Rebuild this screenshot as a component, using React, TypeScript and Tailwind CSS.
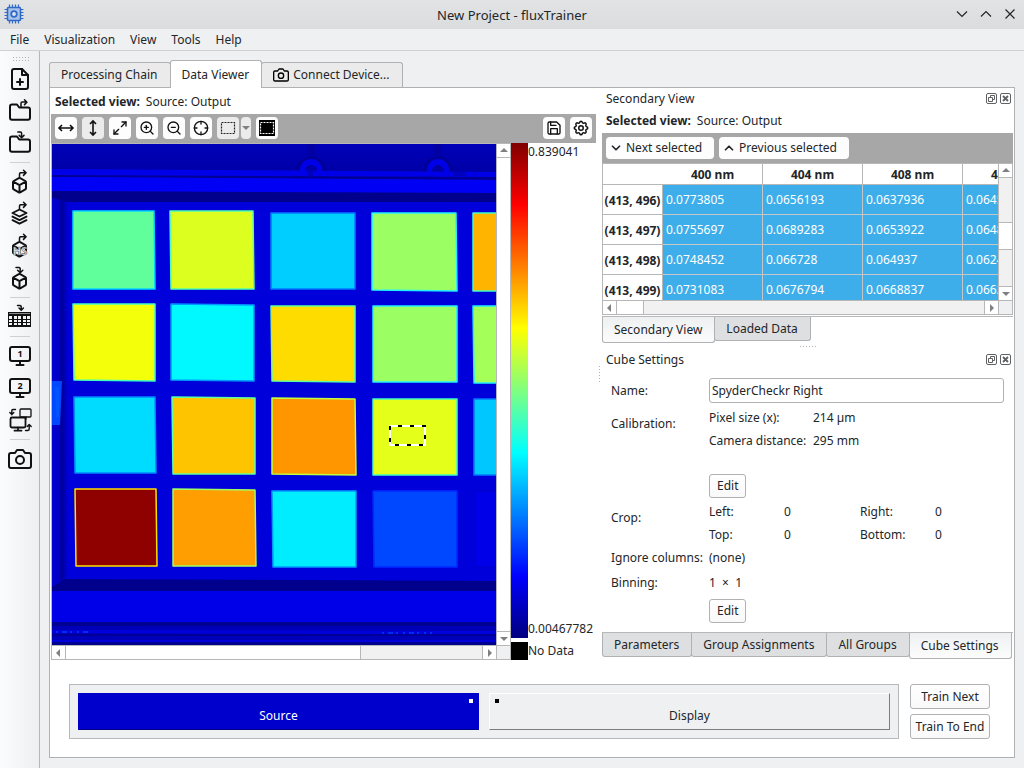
import { useState } from 'react';
import type { ReactNode } from 'react';
import {
  FiCamera,
  FiChevronDown,
  FiChevronUp,
  FiCrosshair,
  FiFilePlus,
  FiMaximize2,
  FiSave,
  FiZoomIn,
  FiZoomOut,
} from 'react-icons/fi';
import { TbSettings } from 'react-icons/tb';

const MENUS = ['File', 'Visualization', 'View', 'Tools', 'Help'];

const COLUMNS = ['400 nm', '404 nm', '408 nm', '412 nm'];

const ROWS = [
  { pos: '(413, 496)', values: ['0.0773805', '0.0656193', '0.0637936', '0.0645321'] },
  { pos: '(413, 497)', values: ['0.0755697', '0.0689283', '0.0653922', '0.0648117'] },
  { pos: '(413, 498)', values: ['0.0748452', '0.066728', '0.064937', '0.0624409'] },
  { pos: '(413, 499)', values: ['0.0731083', '0.0676794', '0.0668837', '0.0662518'] },
];

// Color patches of the chart: corner points, fill, edge color
const PATCHES = [
  { points: '21,67 102,67 103,145 21,145', fill: '#60ff9c', edge: '#00d8ff' },
  { points: '118,67 201,67 202,145 119,145', fill: '#dcff20', edge: '#50ffb0' },
  { points: '219,69 303,69 303,145 219,145', fill: '#00ceff', edge: '#0078ff' },
  { points: '320,69 404,69 405,147 320,146', fill: '#9bff64', edge: '#20f0ff' },
  { points: '421,69 460,69 460,147 421,147', fill: '#ffb400', edge: '#40ffc0' },
  { points: '21,160 103,160 103,237 22,236', fill: '#f4ff0a', edge: '#40ffc0' },
  { points: '119,160 202,161 202,237 119,236', fill: '#00f8ff', edge: '#0098ff' },
  { points: '219,162 303,162 303,238 220,237', fill: '#ffdc00', edge: '#60ffa0' },
  { points: '321,162 405,162 405,238 321,238', fill: '#9bff64', edge: '#20f0ff' },
  { points: '421,162 460,162 460,239 422,239', fill: '#a4ff58', edge: '#20f0ff' },
  { points: '22,253 103,253 104,329 23,329', fill: '#00dcff', edge: '#0088ff' },
  { points: '120,253 203,254 203,330 121,330', fill: '#ffc400', edge: '#60ffa0' },
  { points: '220,254 303,255 304,331 220,330', fill: '#ff9600', edge: '#c0ff40' },
  { points: '321,255 405,255 405,331 321,331', fill: '#e4ff1a', edge: '#40ffc0' },
  { points: '422,255 460,255 460,331 422,331', fill: '#00c8ff', edge: '#0078ff' },
  { points: '23,345 104,345 105,422 24,422', fill: '#8f0000', edge: '#ffe000' },
  { points: '121,345 203,346 204,422 121,422', fill: '#ff9e00', edge: '#a0ff60' },
  { points: '220,347 304,347 304,423 221,423', fill: '#00ecff', edge: '#0098ff' },
  { points: '321,347 405,347 405,423 322,423', fill: '#0048ff', edge: '#0028ff' },
  { points: '422,347 460,347 460,423 422,423', fill: '#0000e8', edge: '#0000d0' },
];

const ARROW_OUT = 'M15.500 11V8q0-1.200 1.200-1.200H21.500M19.500 4.200l2.600 2.600-2.600 2.600';
const ARROW_IN = 'M12 5.500h3q1.200 0 1.200 1.200V10.500M13.600 8.200l2.600 2.600 2.600-2.600';
const FOLDER =
  'M26 22.800a2 2 0 0 1-2 2H8a2 2 0 0 1-2-2V11.500a2 2 0 0 1 2-2h5l2.200 3H24a2 2 0 0 1 2 2z';

function ToolIcon({ children }: { children: ReactNode }) {
  return (
    <svg
      viewBox="0 0 32 32"
      className="w-8 h-8"
      fill="none"
      stroke="#111111"
      strokeWidth="2"
      strokeLinecap="round"
      strokeLinejoin="round"
      aria-hidden="true"
    >
      {children}
    </svg>
  );
}

function Cube() {
  return (
    <path d="M22 16.200v6a1.400 1.400 0 0 1-.700 1.200l-5.100 2.900a1.400 1.400 0 0 1-1.400 0l-5.100-2.900a1.400 1.400 0 0 1-.700-1.200v-6a1.400 1.400 0 0 1 .700-1.200l5.100-2.900a1.400 1.400 0 0 1 1.400 0l5.100 2.900a1.400 1.400 0 0 1 .700 1.200zM9.300 15.600l6.200 3.500 6.200-3.500M15.500 26v-7" />
  );
}

function Monitor({ digit }: { digit: string }) {
  return (
    <>
      <rect x="6" y="7" width="20" height="14" rx="2" />
      <path d="M16 21v4M12.500 25h7" />
      <text
        x="16"
        y="17"
        textAnchor="middle"
        fill="#111111"
        stroke="none"
        className="text-[9px] font-bold"
      >
        {digit}
      </text>
    </>
  );
}

function ToolButton({ label, children }: { label: string; children: ReactNode }) {
  return (
    <button aria-label={label} title={label} className="w-8 h-8 flex items-center justify-center text-[#111111]">
      {children}
    </button>
  );
}

function ToolDivider() {
  return <div className="w-5 h-px my-[3px] bg-[#cfd0d2]" />;
}

function SideToolbar() {
  return (
    <aside className="w-10 shrink-0 pl-px pt-[5px] flex flex-col items-center border-r border-[#b4b6b8] bg-gradient-to-r from-[#fbfcfe] to-[#eeeff1]">
      <div className="w-[17px] h-[5px] mb-0.5 bg-[radial-gradient(#b0b2b4_1px,transparent_1px)] bg-[length:3px_3px]" />
      <ToolButton label="New project">
        <FiFilePlus className="w-6 h-6" />
      </ToolButton>
      <ToolButton label="Open project">
        <ToolIcon>
          <path d={FOLDER} />
          <path d="M17 12V8.200q0-1.200 1.200-1.200H22.500M20.500 4.800l2.400 2.400-2.400 2.400" strokeWidth="1.500" />
        </ToolIcon>
      </ToolButton>
      <ToolButton label="Save project">
        <ToolIcon>
          <path d={FOLDER} />
          <path d="M13.800 5h2.600q1.200 0 1.200 1.200v4M15.200 8.400l2.400 2.400 2.400-2.400" strokeWidth="1.500" />
        </ToolIcon>
      </ToolButton>
      <ToolDivider />
      <ToolButton label="Load cube">
        <ToolIcon>
          <Cube />
          <path d={ARROW_OUT} strokeWidth="1.500" />
        </ToolIcon>
      </ToolButton>
      <ToolButton label="Load layers">
        <ToolIcon>
          <path
            d="M15.500 11.500l-7 3.500 7 3.500 7-3.500zM8.500 18.600l7 3.500 7-3.500M8.500 22.200l7 3.500 7-3.500"
            strokeWidth="1.900"
          />
          <path d={ARROW_OUT} strokeWidth="1.500" />
        </ToolIcon>
      </ToolButton>
      <ToolButton label="Load HS cube">
        <ToolIcon>
          <Cube />
          <text
            x="16"
            y="25"
            textAnchor="middle"
            fill="#ececee"
            stroke="#777777"
            strokeWidth="0.600"
            className="text-[11px] font-bold"
          >
            HS
          </text>
          <path d={ARROW_OUT} strokeWidth="1.500" />
        </ToolIcon>
      </ToolButton>
      <ToolButton label="Save cube">
        <ToolIcon>
          <Cube />
          <path d={ARROW_IN} strokeWidth="1.500" />
        </ToolIcon>
      </ToolButton>
      <ToolDivider />
      <ToolButton label="Export table">
        <ToolIcon>
          <path d="M13.500 4.500h2.500q1.200 0 1.200 1.200v3M15 7l2.200 2.200L19.400 7" strokeWidth="1.500" />
          <rect x="4" y="11" width="23" height="15" fill="#111111" stroke="none" />
          {[15, 19, 22].map((y) =>
            [5, 10, 14, 19, 23].map((x) => (
              <rect key={`${x}-${y}`} x={x} y={y} width={3} height={y === 15 ? 3 : 2} fill="#f2f3f5" stroke="none" />
            ))
          )}
          <path d="M5 12.500h21" stroke="#8a8a8a" strokeWidth="1" strokeLinecap="butt" />
        </ToolIcon>
      </ToolButton>
      <ToolDivider />
      <ToolButton label="Monitor 1">
        <ToolIcon>
          <Monitor digit="1" />
        </ToolIcon>
      </ToolButton>
      <ToolButton label="Monitor 2">
        <ToolIcon>
          <Monitor digit="2" />
        </ToolIcon>
      </ToolButton>
      <ToolButton label="Swap monitors">
        <ToolIcon>
          <rect x="16" y="5" width="11" height="8" rx="1" strokeWidth="1.300" />
          <path d="M22 13v2" strokeWidth="1.300" />
          <rect x="6.500" y="13.500" width="15" height="10" rx="1.500" fill="#f2f3f5" strokeWidth="1.800" />
          <path d="M14 23.500v3M10.500 26.700h7" strokeWidth="1.700" />
          <path d="M11.500 5.500H9q-1.200 0-1.200 1.200v4M5.800 8.600l2 2 2-2" strokeWidth="1.400" />
          <path d="M21.500 26.500h2.200q1.500 0 1.500-1.500v-4M23.200 22.600l2-2 2 2" strokeWidth="1.400" />
        </ToolIcon>
      </ToolButton>
      <ToolDivider />
      <ToolButton label="Camera">
        <FiCamera className="w-6 h-6" />
      </ToolButton>
    </aside>
  );
}

function TitleBar() {
  return (
    <header className="relative h-[29px] flex items-center justify-center bg-gradient-to-b from-[#e1e3e4] to-[#dbdcde] text-[13px]">
      <svg
        viewBox="0 0 20 20"
        className="absolute left-1 top-1 w-5 h-5"
        fill="none"
        stroke="#2f6ac8"
        strokeWidth="1.600"
        aria-hidden="true"
      >
        <rect x="3.500" y="3.500" width="13" height="13" rx="1" fill="#a9c2e8" />
        <circle cx="10" cy="10" r="2.800" fill="#dfe6f0" strokeWidth="1.800" />
        <path
          d="M5.500 .500v3M8.500 .500v3M11.500 .500v3M14.500 .500v3M5.500 16.500v3M8.500 16.500v3M11.500 16.500v3M14.500 16.500v3M.500 5.500h3M.500 8.500h3M.500 11.500h3M.500 14.500h3M16.500 5.500h3M16.500 8.500h3M16.500 11.500h3M16.500 14.500h3"
          strokeWidth="1.200"
        />
      </svg>
      <h1>New Project - fluxTrainer</h1>
      <div className="absolute right-1.5 top-1.5 flex gap-2 text-[#232629]">
        <button aria-label="Minimize">
          <svg viewBox="0 0 16 16" className="w-4 h-4" fill="none" stroke="currentColor" strokeWidth="1.200">
            <path d="M3 5.500l5 5 5-5" />
          </svg>
        </button>
        <button aria-label="Maximize">
          <svg viewBox="0 0 16 16" className="w-4 h-4" fill="none" stroke="currentColor" strokeWidth="1.200">
            <path d="M3 10.500l5-5 5 5" />
          </svg>
        </button>
        <button aria-label="Close">
          <svg viewBox="0 0 16 16" className="w-4 h-4" fill="none" stroke="currentColor" strokeWidth="1.200">
            <path d="M3.500 3.500l9 9M12.500 3.500l-9 9" />
          </svg>
        </button>
      </div>
    </header>
  );
}

function SelectedView() {
  return (
    <>
      <span className="font-bold">Selected view:</span>
      <span className="ml-1.5">Source: Output</span>
    </>
  );
}

function ViewButton({ label, dim, children }: { label: string; dim?: boolean; children: ReactNode }) {
  return (
    <button
      aria-label={label}
      title={label}
      className={`w-[22px] h-[22px] shrink-0 flex items-center justify-center rounded-sm text-[#111111] ${
        dim ? 'bg-[#ebebeb]' : 'bg-[#fdfdfd]'
      }`}
    >
      {children}
    </button>
  );
}

function SelectIcon({ filled }: { filled?: boolean }) {
  return (
    <svg viewBox="0 0 18 18" className="w-[18px] h-[18px]" fill="none" strokeWidth="1.200" aria-hidden="true">
      {filled && <rect x="1" y="1" width="16" height="16" fill="#000000" />}
      <rect
        x="2.500"
        y="3.500"
        width="13"
        height="11"
        stroke={filled ? '#ffffff' : '#222222'}
        strokeDasharray="2 1"
      />
    </svg>
  );
}

const TRIANGLES = {
  up: 'M0 5l4-4 4 4z',
  down: 'M0 2l4 4 4-4z',
  left: 'M5 0L1 4l4 4z',
  right: 'M2 0l4 4-4 4z',
};

function Triangle({ dir }: { dir: keyof typeof TRIANGLES }) {
  return (
    <svg viewBox="0 0 8 8" className="w-2 h-2" fill="#7f8081" aria-hidden="true">
      <path d={TRIANGLES[dir]} />
    </svg>
  );
}

function ScrollButton({ dir }: { dir: keyof typeof TRIANGLES }) {
  return (
    <button aria-label={`Scroll ${dir}`} className="w-[13px] h-[13px] shrink-0 flex items-center justify-center bg-white">
      <Triangle dir={dir} />
    </button>
  );
}

function CubeImage() {
  return (
    <svg
      viewBox="0 0 444 501"
      preserveAspectRatio="xMinYMin slice"
      className="block w-full h-[501px]"
      role="img"
      aria-label="False color view of the cube"
    >
      <defs>
        <linearGradient id="top" x1="0" y1="0" x2="0" y2="1">
          <stop offset="0" stopColor="#0000b8" />
          <stop offset="1" stopColor="#0000a8" />
        </linearGradient>
        <linearGradient id="left" x1="0" y1="0" x2="1" y2="0">
          <stop offset="0" stopColor="#0000d0" />
          <stop offset="0.4" stopColor="#0000c8" />
          <stop offset="0.6" stopColor="#000098" />
          <stop offset="1" stopColor="#0000d8" />
        </linearGradient>
      </defs>
      <rect width="460" height="501" fill="#0000da" />
      <rect width="460" height="28" fill="url(#top)" />
      {/* rivets on the upper rail */}
      {[259, 386].map((x) => (
        <g key={x}>
          <rect x={x - 4} y="0" width="8" height="16" fill="#0000a4" />
          <circle cx={x} cy="28" r="14" fill="#0000a0" stroke="#000098" strokeWidth="3" />
          <circle cx={x} cy="26" r="11" fill="#0000e8" />
          <circle cx={x} cy="27" r="6" fill="#0000a4" />
        </g>
      ))}
      <path d="M0 25L460 28v5L0 31z" fill="#0000e8" />
      <path d="M0 31L460 33v3L0 33z" fill="#000096" />
      <path d="M0 33L460 36v13L0 47z" fill="#0000f4" />
      <path d="M255 27h6v5h-6zM402 28h12v4h-12z" fill="#0000c0" />
      <path d="M0 47L460 49v9H12L0 54z" fill="#00008c" />
      <path d="M0 54L16 58V432L0 442z" fill="url(#left)" />
      <path d="M0 237h10l-2 44H0z" fill="#0048ff" />
      <path d="M3 243h4v30H4z" fill="#0068ff" opacity="0.4" />
      <path d="M12 435L460 437v11H0V443z" fill="#00008c" />
      <path d="M0 447h460v31H0z" fill="#0000e8" />
      <path d="M0 478h460v4H0z" fill="#000092" />
      <path d="M0 482h460v14H0z" fill="#0000b8" />
      <path d="M0 486L460 487v3L0 489z" fill="#0000dc" />
      <path d="M0 490h460v2H0z" fill="#000098" />
      <path d="M0 498h460v3H0z" fill="#000090" />
      <path
        d="M4 488h32M330 489h50"
        stroke="#0048ff"
        strokeWidth="2"
        strokeDasharray="2 4 5 3 2 5"
        opacity="0.6"
      />
      {PATCHES.map((patch) => (
        <polygon
          key={patch.points}
          points={patch.points}
          fill={patch.fill}
          stroke={patch.edge}
          strokeWidth="1.500"
          strokeLinejoin="round"
        />
      ))}
      {/* current selection */}
      <rect x="338" y="282" width="35" height="19" fill="none" stroke="#ffffff" strokeWidth="2" />
      <rect
        x="338"
        y="282"
        width="35"
        height="19"
        fill="none"
        stroke="#000000"
        strokeWidth="2"
        strokeDasharray="4 8"
        strokeDashoffset="4"
      />
    </svg>
  );
}

function DataViewer() {
  return (
    <section className="min-w-0">
      <div className="h-[26px] pl-1 pt-px flex items-center">
        <SelectedView />
      </div>
      <div className="h-[29px] px-1 pb-px flex items-center gap-[5px] bg-[#a7a7a7]">
        <ViewButton label="Fit width">
          <svg viewBox="0 0 18 18" className="w-[18px] h-[18px]" fill="none" stroke="currentColor" strokeWidth="1.600">
            <path d="M2 9h14M5 6L2 9l3 3M13 6l3 3-3 3" />
          </svg>
        </ViewButton>
        <ViewButton label="Fit height" dim>
          <svg viewBox="0 0 18 18" className="w-[18px] h-[18px]" fill="none" stroke="currentColor" strokeWidth="1.600">
            <path d="M9 2v14M6 5l3-3 3 3M6 13l3 3 3-3" />
          </svg>
        </ViewButton>
        <ViewButton label="Fit window">
          <FiMaximize2 className="w-4 h-4" />
        </ViewButton>
        <ViewButton label="Zoom in">
          <FiZoomIn className="w-4 h-4" />
        </ViewButton>
        <ViewButton label="Zoom out">
          <FiZoomOut className="w-4 h-4" />
        </ViewButton>
        <ViewButton label="Pick pixel">
          <FiCrosshair className="w-4 h-4" />
        </ViewButton>
        <div className="flex gap-0.5">
          <ViewButton label="Select rectangle" dim>
            <SelectIcon />
          </ViewButton>
          <button
            aria-label="Selection modes"
            className="w-2.5 h-[22px] flex items-center justify-center rounded-sm bg-[#ebebeb]"
          >
            <Triangle dir="down" />
          </button>
        </div>
        <ViewButton label="Invert selection">
          <SelectIcon filled />
        </ViewButton>
        <div className="flex-1" />
        <ViewButton label="Save image">
          <FiSave className="w-4 h-4" />
        </ViewButton>
        <ViewButton label="View settings">
          <TbSettings className="w-[18px] h-[18px]" />
        </ViewButton>
      </div>
      <div className="flex">
        <div className="flex-1 min-w-0 border border-r-0 border-[#b7b7b7]">
          <div className="flex">
            <div className="flex-1 min-w-0">
              <CubeImage />
            </div>
            <div className="w-[15px] shrink-0 border-x border-[#b7b7b7] flex flex-col bg-white">
              <ScrollButton dir="up" />
              <div className="flex-1 border-y border-[#b7b7b7] bg-white" />
              <ScrollButton dir="down" />
            </div>
          </div>
          <div className="flex border-t border-[#b7b7b7]">
            <ScrollButton dir="left" />
            <div className="flex-1 flex border-x border-[#b7b7b7] bg-[#f1f1f1]">
              <div className="w-[71%] border-r border-[#b7b7b7] bg-white" />
            </div>
            <ScrollButton dir="right" />
            <div className="w-[15px] border-x border-[#b7b7b7] bg-[#eff0f1]" />
          </div>
        </div>
        <div className="w-[85px] shrink-0 flex flex-col">
          <div className="flex-1 flex">
            <div className="w-[17px] shrink-0 bg-[linear-gradient(to_bottom,#800000,#ff0000_12.5%,#ffff00_37.5%,#00ffff_62.5%,#0000ff_87.5%,#000080)]" />
            <div className="flex flex-col justify-between">
              <span>0.839041</span>
              <span>0.00467782</span>
            </div>
          </div>
          <div className="mt-1 h-[18px] flex items-center">
            <div className="w-[17px] h-[18px] bg-black" />
            <span>No Data</span>
          </div>
        </div>
      </div>
    </section>
  );
}

function DockHeader({ title }: { title: string }) {
  return (
    <div className="h-[21px] pl-1 pr-0.5 flex items-center gap-[3px]">
      <h2 className="flex-1">{title}</h2>
      <button aria-label={`Float ${title}`} className="w-[11px] h-[11px]">
        <svg viewBox="0 0 11 11" className="w-[11px] h-[11px]" fill="none" stroke="#5f6163">
          <rect x="0.500" y="0.500" width="10" height="10" rx="1.500" />
          <path d="M4.500 4V2.500h4v4H7M2.500 4.500h4v4h-4z" />
        </svg>
      </button>
      <button aria-label={`Close ${title}`} className="w-[11px] h-[11px]">
        <svg viewBox="0 0 11 11" className="w-[11px] h-[11px]" fill="none" stroke="#5f6163">
          <rect x="0.500" y="0.500" width="10" height="10" rx="1.500" />
          <path d="M3 3l5 5M8 3L3 8" strokeWidth="1.800" />
        </svg>
      </button>
    </div>
  );
}

function DockTabs({ tabs, initial }: { tabs: string[]; initial: string }) {
  const [active, setActive] = useState(initial);

  return (
    <div className="flex items-start border-t border-[#b7b8b9]" role="tablist">
      {tabs.map((tab) => (
        <button
          key={tab}
          role="tab"
          aria-selected={tab === active}
          onClick={() => setActive(tab)}
          className={`pl-[11px] pr-3 border border-t-0 border-[#b0b1b3] rounded-b-[3px] -mr-px last:mr-0 whitespace-nowrap ${
            tab === active ? 'h-[26px] bg-gradient-to-b from-[#eef0f1] to-[#fcfcfc]' : 'h-6 bg-[#dedfe0]'
          }`}
        >
          {tab}
        </button>
      ))}
    </div>
  );
}

function SecondaryView() {
  return (
    <section>
      <DockHeader title="Secondary View" />
      <div className="h-6 pl-1 flex items-center">
        <SelectedView />
      </div>
      <div className="h-[30px] px-1 flex items-center gap-[5px] bg-[#a7a7a7]">
        <button className="h-[22px] pl-[3px] pr-3 flex items-center gap-[3px] rounded-sm bg-[#fdfdfd] whitespace-nowrap">
          <FiChevronDown className="w-3.5 h-3.5 stroke-3" />
          Next selected
        </button>
        <button className="h-[22px] pl-[3px] pr-3 flex items-center gap-[3px] rounded-sm bg-[#fdfdfd] whitespace-nowrap">
          <FiChevronUp className="w-3.5 h-3.5 stroke-3" />
          Previous selected
        </button>
      </div>
      <div className="border border-[#b7b7b7]">
        <div className="flex h-[136px]">
          <div className="flex-1 min-w-0 overflow-hidden">
            <table className="w-[460px] table-fixed border-separate border-spacing-0">
              <thead>
                <tr className="h-[21px]">
                  <td className="w-[60px] border-b border-[#b7b7b7]" />
                  {COLUMNS.map((column) => (
                    <th key={column} scope="col" className="p-0 pt-px border-r border-b border-[#b7b7b7]">
                      {column}
                    </th>
                  ))}
                </tr>
              </thead>
              <tbody>
                {ROWS.map((row) => (
                  <tr key={row.pos} className="h-[30px]">
                    <th scope="row" className="p-0 pt-0.5 border-r border-b border-[#b7b7b7] whitespace-nowrap">
                      {row.pos}
                    </th>
                    {row.values.map((value) => (
                      <td key={value} className="px-[3px] py-0 border-r border-b border-[#c4c6c8] bg-[#3daee9] text-white">
                        {value}
                      </td>
                    ))}
                  </tr>
                ))}
              </tbody>
            </table>
          </div>
          <div className="w-3.5 shrink-0 flex flex-col border-l border-[#b7b7b7] bg-[#f1f1f1]">
            <ScrollButton dir="up" />
            <div className="flex-1 flex flex-col justify-end border-y border-[#b7b7b7]">
              <div className="h-7 mb-9 border-y border-[#b7b7b7] bg-white" />
            </div>
            <ScrollButton dir="down" />
          </div>
        </div>
        <div className="flex border-t border-[#b7b7b7]">
          <ScrollButton dir="left" />
          <div className="flex-1 flex border-x border-[#b7b7b7] bg-[#f1f1f1]">
            <div className="w-[27px] border-r border-[#b7b7b7] bg-white" />
          </div>
          <ScrollButton dir="right" />
          <div className="w-3.5 border-l border-[#b7b7b7] bg-[#eff0f1]" />
        </div>
      </div>
      <div className="pt-px">
        <DockTabs tabs={['Secondary View', 'Loaded Data']} initial="Secondary View" />
      </div>
    </section>
  );
}

function Field({ label, children }: { label: string; children: ReactNode }) {
  return (
    <div className="grid grid-cols-[98px_1fr]">
      <span className="pt-1.5 whitespace-nowrap">{label}</span>
      <div>{children}</div>
    </div>
  );
}

function EditButton({ label }: { label: string }) {
  return (
    <button
      aria-label={label}
      className="h-6 px-[7px] rounded-[3px] border border-[#b0b1b3] bg-gradient-to-b from-white to-[#f9f9fa]"
    >
      Edit
    </button>
  );
}

function CubeSettings() {
  const [name, setName] = useState('SpyderCheckr Right');

  return (
    <section>
      <DockHeader title="Cube Settings" />
      <div className="pt-2 pl-[9px] pr-[9px] pb-[9px]">
        <div className="grid grid-cols-[98px_1fr] items-center">
          <label htmlFor="cube-name">Name:</label>
          <input
            id="cube-name"
            value={name}
            onChange={(e) => setName(e.target.value)}
            className="w-full h-[25px] px-0.5 rounded-[3px] border border-[#b0b1b3] bg-white"
          />
        </div>
        <div className="mt-1.5">
          <Field label="Calibration:">
            <div className="grid grid-cols-[104px_1fr] gap-y-[5px] whitespace-nowrap">
              <span>Pixel size (x):</span>
              <span>214 µm</span>
              <span>Camera distance:</span>
              <span>295 mm</span>
            </div>
            <div className="mt-6">
              <EditButton label="Edit calibration" />
            </div>
          </Field>
        </div>
        <div className="mt-[5px]">
          <Field label="Crop:">
            <div className="grid grid-cols-[75px_76px_75px_1fr] gap-y-[5px]">
              <span>Left:</span>
              <span>0</span>
              <span>Right:</span>
              <span>0</span>
              <span>Top:</span>
              <span>0</span>
              <span>Bottom:</span>
              <span>0</span>
            </div>
          </Field>
        </div>
        <div className="mt-[5px] grid grid-cols-[98px_1fr] gap-y-[7px]">
          <span className="whitespace-nowrap">Ignore columns:</span>
          <span>(none)</span>
          <span>Binning:</span>
          <span className="whitespace-pre">{'1  ×  1'}</span>
          <span />
          <div>
            <EditButton label="Edit binning" />
          </div>
        </div>
      </div>
      <DockTabs tabs={['Parameters', 'Group Assignments', 'All Groups', 'Cube Settings']} initial="Cube Settings" />
    </section>
  );
}

function ChainBar() {
  return (
    <footer className="mt-6 mb-[18px] ml-[19px] mr-6 flex gap-[11px]">
      <div className="flex-1 p-2 grid grid-cols-2 gap-2.5 border border-[#b7b8b9] bg-[#eff0f1]">
        <button className="relative h-[37px] pt-2 bg-[#0000cd] text-white border border-[#0000cd] border-b-[#000080]">
          Source
          <span className="absolute right-[5px] top-[5px] w-1 h-1 bg-white" />
        </button>
        <button className="relative h-[37px] pt-2 border border-t-white border-l-white border-r-[#7c7d7e] border-b-[#7c7d7e]">
          Display
          <span className="absolute left-[5px] top-[5px] w-1 h-1 bg-black" />
        </button>
      </div>
      <div className="w-20 flex flex-col justify-between">
        {['Train Next', 'Train To End'].map((label) => (
          <button
            key={label}
            className="h-[25px] rounded-[3px] border border-[#b0b1b3] bg-gradient-to-b from-white to-[#f9f9fa] whitespace-nowrap"
          >
            {label}
          </button>
        ))}
      </div>
    </footer>
  );
}

const TABS = ['Processing Chain', 'Data Viewer', 'Connect Device...'];

export default function App() {
  const [tab, setTab] = useState('Data Viewer');

  return (
    <div className="min-h-screen flex flex-col bg-[#eff0f1] text-[#232629] text-[12px] leading-[18px] font-['Noto_Sans',sans-serif]">
      <TitleBar />
      <nav className="h-[22px] pl-2.5 flex items-center gap-[15px] border-b border-[#cfd0d2]">
        {MENUS.map((menu) => (
          <button key={menu}>{menu}</button>
        ))}
      </nav>
      <div className="flex-1 flex">
        <SideToolbar />
        <main className="flex-1 min-w-0 flex flex-col pt-[9px] pl-[9px] pr-[9px] pb-2.5">
          <div className="flex items-end" role="tablist">
            {TABS.map((name) => (
              <button
                key={name}
                role="tab"
                aria-selected={name === tab}
                onClick={() => setTab(name)}
                className={`pl-[11px] pr-3 flex items-center gap-1 border border-[#b0b1b3] border-b-0 rounded-t-[3px] -mr-px whitespace-nowrap ${
                  name === tab ? 'relative h-7 -mb-px bg-white' : 'h-[25px] bg-[#ebebec]'
                }`}
              >
                {name.startsWith('Connect') && <FiCamera className="w-4 h-4 text-black" />}
                {name}
              </button>
            ))}
          </div>
          <div className="flex-1 border border-[#b0b1b3] bg-white">
            <div className="px-px grid grid-cols-[545fr_6px_411fr]">
              <DataViewer />
              <div className="flex items-center justify-center">
                <div className="w-[3px] h-[18px] bg-[radial-gradient(#b0b2b4_1px,transparent_1px)] bg-[length:3px_3px]" />
              </div>
              <div className="min-w-0">
                <SecondaryView />
                <div className="h-[6px] flex items-center justify-center">
                  <div className="w-[18px] h-[3px] bg-[radial-gradient(#b0b2b4_1px,transparent_1px)] bg-[length:3px_3px]" />
                </div>
                <CubeSettings />
              </div>
            </div>
            <ChainBar />
          </div>
        </main>
      </div>
    </div>
  );
}
